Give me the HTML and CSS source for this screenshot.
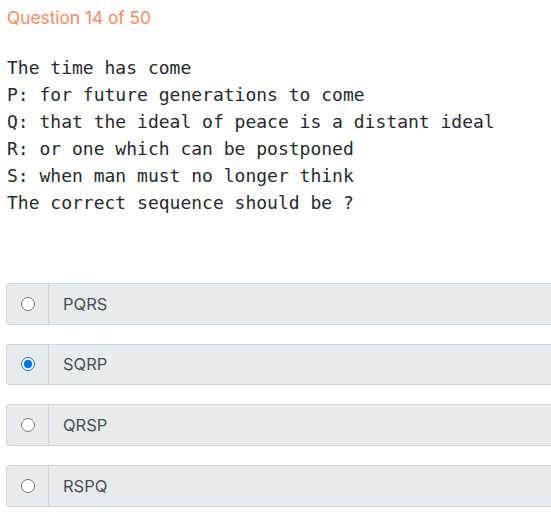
FILE: index.html
```html
<!DOCTYPE html>
<html>
<head>
<meta charset="utf-8">
<link rel="stylesheet" href="styles.css">
</head>
<body>
<div class="page">
  <div class="qnum">Question 14 of 50</div>
  <pre class="question">The time has come
P: for future generations to come
Q: that the ideal of peace is a distant ideal
R: or one which can be postponed
S: when man must no longer think
The correct sequence should be ?</pre>
  <div class="options">
    <label class="option">
      <span class="radio-box"><input type="radio" name="ans"></span>
      <span class="option-text">PQRS</span>
    </label>
    <label class="option">
      <span class="radio-box"><input type="radio" name="ans" checked></span>
      <span class="option-text">SQRP</span>
    </label>
    <label class="option">
      <span class="radio-box"><input type="radio" name="ans"></span>
      <span class="option-text">QRSP</span>
    </label>
    <label class="option">
      <span class="radio-box"><input type="radio" name="ans"></span>
      <span class="option-text">RSPQ</span>
    </label>
  </div>
</div>
</body>
</html>
```

FILE: styles.css
```css
html, body {
  margin: 0;
  padding: 0;
  background: #ffffff;
  overflow: hidden;
}
.page {
  padding: 6px 0 0 6px;
  font-family: Inter, "Open Sans", "Liberation Sans", sans-serif;
}
.qnum {
  color: #fd8a5c;
  font-size: 17.3px;
  line-height: 24px;
  padding-left: 1px;
}
.question {
  margin: 24px 0 0 1px;
  font-family: "DejaVu Sans Mono", "Liberation Mono", monospace;
  font-size: 18px;
  line-height: 27px;
  color: #262a2e;
  white-space: pre;
}
.options {
  margin-top: 67px;
  display: flex;
  flex-direction: column;
  gap: 19px;
}
.option {
  display: flex;
  height: 41.67px;
  box-sizing: border-box;
  border: 1px solid #ced4da;
  border-right: none;
  border-radius: 4px 0 0 4px;
  background: #e9ecef;
  align-items: stretch;
}
.radio-box {
  width: 42px;
  box-sizing: border-box;
  border-right: 1px solid #ced4da;
  display: flex;
  align-items: center;
  justify-content: center;
}
.radio-box input {
  margin: 0;
  width: 14px;
  height: 14px;
}
.option-text {
  display: flex;
  align-items: center;
  padding-left: 14px;
  font-size: 16.5px;
  color: #495057;
}
```
